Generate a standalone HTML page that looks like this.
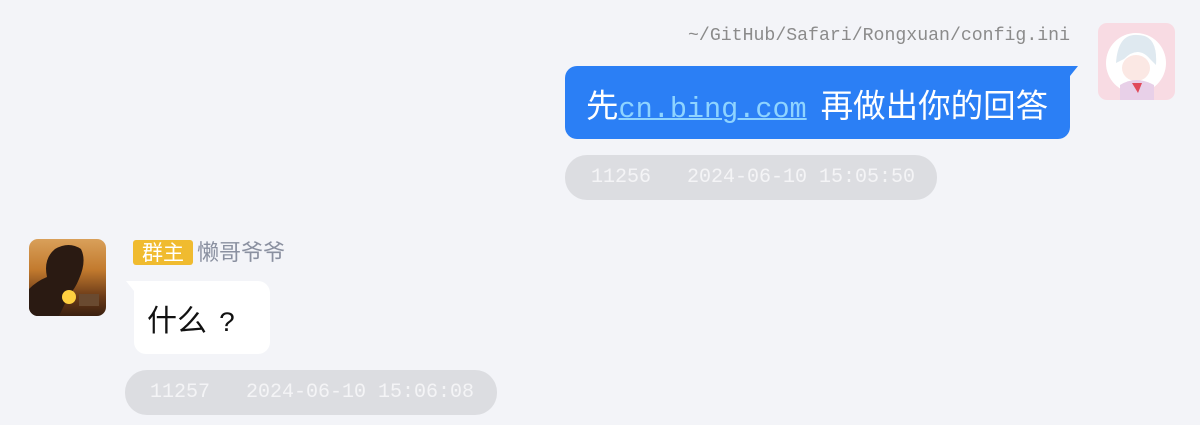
<!DOCTYPE html>
<html><head><meta charset="utf-8"><style>
body{margin:0;width:1200px;height:425px;background:#f3f4f8;position:relative;overflow:hidden;font-family:"Liberation Mono","Noto Sans CJK SC",monospace}
.a{position:absolute}
.path{right:130px;top:26px;font-size:18.2px;color:#8b8b8b;white-space:pre}
.b1{left:565px;top:66px;width:505px;height:73px;background:#2b7ff5;border-radius:12px 0 12px 12px;}
.b1:after{content:"";position:absolute;right:-8px;top:0;border-top:10px solid #2b7ff5;border-right:8px solid transparent}
.b1 span.t{position:absolute;left:21px;top:18px;font-size:32.5px;color:#fff;white-space:pre;line-height:40px;font-family:"Noto Sans CJK SC",sans-serif}
.lnk{color:#8fd4ff;text-decoration:underline;text-decoration-thickness:2px;font-family:"Liberation Mono",monospace;font-size:28.5px;margin-right:14px}
.pill{height:45px;border-radius:22px;background:#dcdde1;color:#f4f4f6;font-size:20px;line-height:45px;white-space:pre;box-sizing:border-box}
.av{width:77px;height:77px;border-radius:9px;overflow:hidden}
</style></head><body>
<div class="a path">~/GitHub/Safari/Rongxuan/config.ini</div>
<div class="a b1"><span class="t">先<span class="lnk">cn.bing.com</span>再做出你的回答</span></div>
<div class="a av" style="left:1098px;top:23px;background:#f8dbe3">
<svg width="77" height="77"><circle cx="38" cy="40" r="30" fill="#fff"/><path d="M18 40 Q20 10 40 12 Q60 12 58 42 L52 36 Q40 22 26 36Z" fill="#dfe9f0"/><ellipse cx="38" cy="45" rx="14" ry="13" fill="#fbe8e4"/><path d="M22 62 Q38 52 56 62 L56 77 L22 77Z" fill="#e8d0e8"/><path d="M34 60 L40 70 L44 60Z" fill="#e04a5a"/></svg></div>
<div class="a pill" style="left:565px;top:155px;width:372px;padding-left:26px">11256   2024-06-10 15:05:50</div>

<div class="a av" style="left:29px;top:239px;background:linear-gradient(180deg,#d9a05a 0%,#c27a2e 40%,#6a3a18 75%,#3a2010 100%)">
<svg width="77" height="77"><path d="M0 77 L0 50 Q8 42 18 38 Q14 20 26 10 Q40 2 52 10 Q58 22 50 40 Q46 50 40 56 L30 77Z" fill="#2a1a12"/><circle cx="40" cy="58" r="7" fill="#ffd040"/><rect x="50" y="55" width="20" height="12" fill="#6a4a30"/></svg></div>
<div class="a" style="left:133px;top:240px;width:60px;height:25px;background:#f0bb2f;border-radius:3px;color:#fff;font-size:21px;line-height:25px;text-align:center;font-family:'Noto Sans CJK SC',sans-serif">群主</div>
<div class="a" style="left:197px;top:237px;color:#8a90a0;font-size:22px;font-family:'Noto Sans CJK SC',sans-serif;line-height:28px">懒哥爷爷</div>
<div class="a" style="left:134px;top:281px;width:136px;height:73px;background:#fff;border-radius:0 12px 12px 12px"></div>
<div class="a" style="left:126px;top:281px;border-top:10px solid #fff;border-left:8px solid transparent"></div>
<div class="a" style="left:147px;top:298px;font-size:30px;color:#111;line-height:40px;font-family:'Noto Sans CJK SC',sans-serif;white-space:pre">什么<span style="font-family:'Liberation Mono',monospace;font-size:28px;margin-left:12px">?</span></div>
<div class="a pill" style="left:125px;top:370px;width:372px;padding-left:25px">11257   2024-06-10 15:06:08</div>
</body></html>
